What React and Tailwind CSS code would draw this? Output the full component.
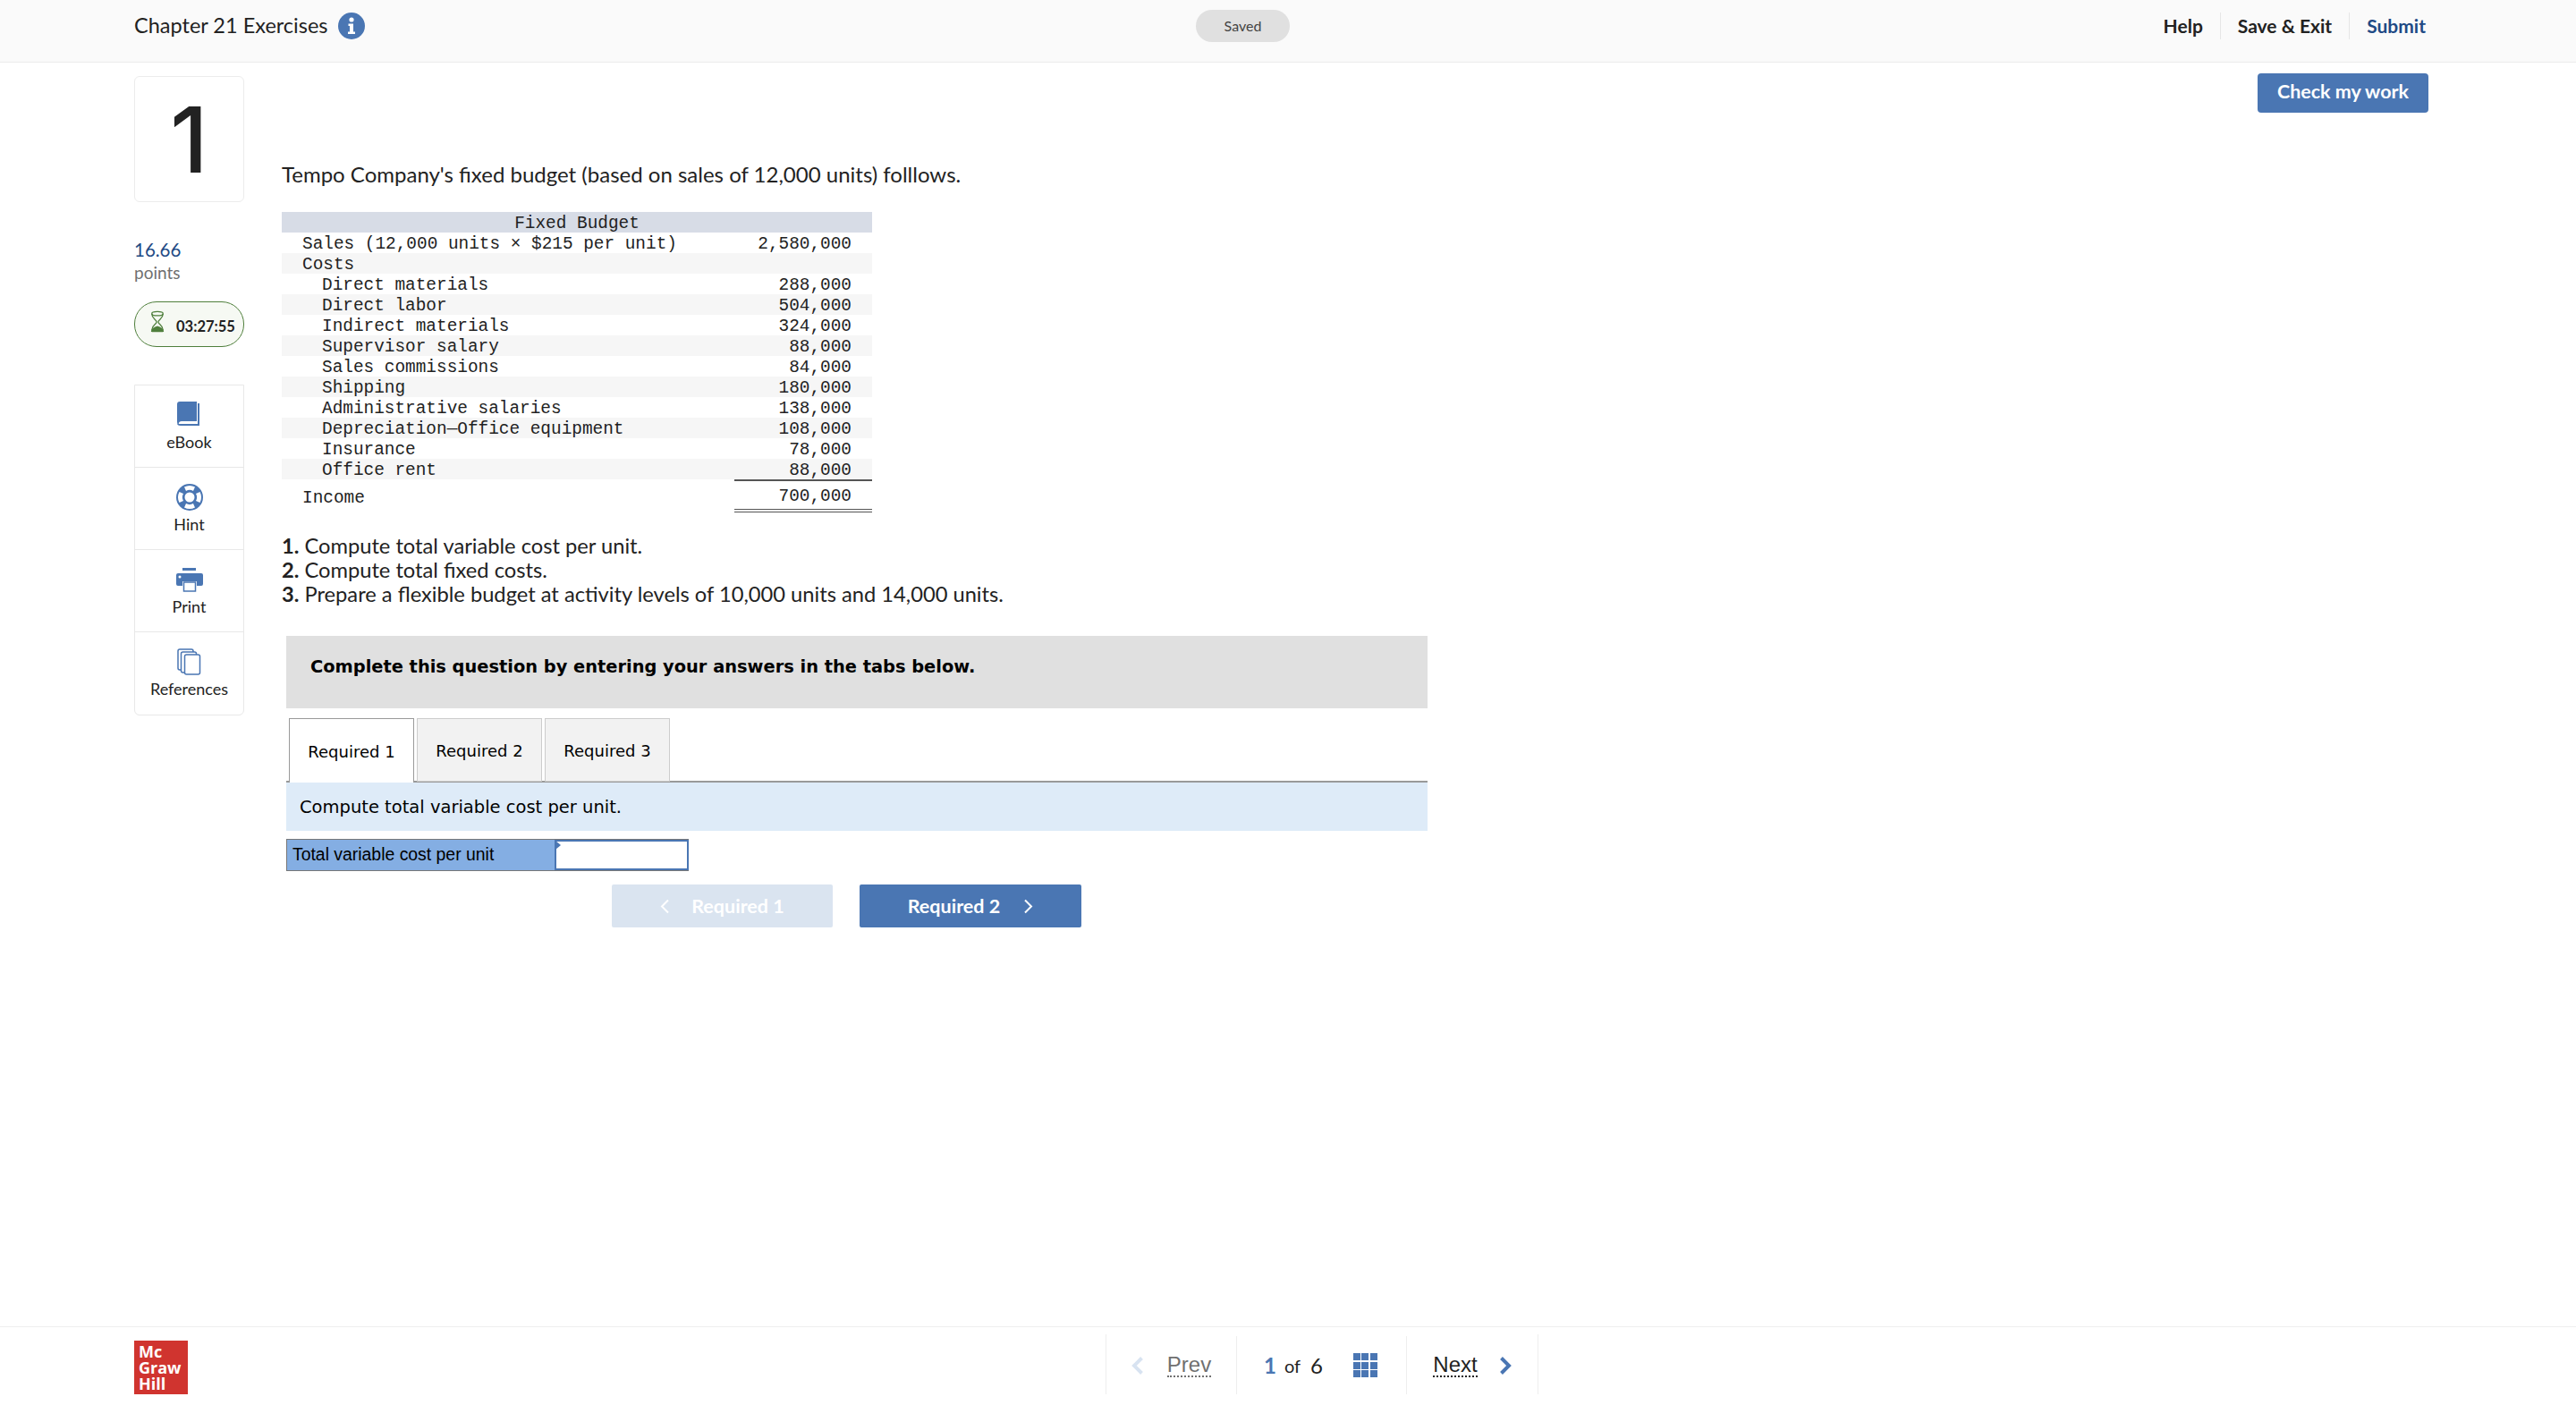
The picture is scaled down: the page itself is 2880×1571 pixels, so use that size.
const sans = "font-['Lato','Open_Sans',sans-serif]";

const budgetRows = [
  { label: "Sales (12,000 units × $215 per unit)", amount: "2,580,000", indent: false },
  { label: "Costs", amount: "", indent: false },
  { label: "Direct materials", amount: "288,000", indent: true },
  { label: "Direct labor", amount: "504,000", indent: true },
  { label: "Indirect materials", amount: "324,000", indent: true },
  { label: "Supervisor salary", amount: "88,000", indent: true },
  { label: "Sales commissions", amount: "84,000", indent: true },
  { label: "Shipping", amount: "180,000", indent: true },
  { label: "Administrative salaries", amount: "138,000", indent: true },
  { label: "Depreciation—Office equipment", amount: "108,000", indent: true },
  { label: "Insurance", amount: "78,000", indent: true },
  { label: "Office rent", amount: "88,000", indent: true },
];

function InfoIcon() {
  return (
    <svg width="30" height="30" viewBox="0 0 30 30">
      <circle cx="15" cy="15" r="15" fill="#4a76b3" />
      <circle cx="15" cy="8" r="2.600" fill="#fff" />
      <path d="M11.500 12.500h5.500v9h2v2.500h-8v-2.500h2v-6.500h-1.500z" fill="#fff" />
    </svg>
  );
}

function Hourglass() {
  return (
    <svg width="16" height="26" viewBox="0 0 18 28">
      <ellipse cx="9" cy="3.500" rx="7" ry="2.500" fill="#f6f9f3" stroke="#4f7f3c" strokeWidth="1.500" />
      <path d="M2 4c0 6 6 7 6 10s-6 4-6 10M16 4c0 6-6 7-6 10s6 4 6 10" fill="none" stroke="#4f7f3c" strokeWidth="1.500" />
      <path d="M1 26c0-4 5-6 8-7 3 1 8 3 8 7 0 1-16 1-16 0z" fill="#4f7f3c" />
    </svg>
  );
}

function BookIcon() {
  return (
    <svg width="28" height="30" viewBox="0 0 28 30">
      <path d="M3 0h19v22H5c-2 0-3 1-3 2v1c-1 0-2-1-2-2V3c0-2 1-3 3-3z" fill="#4a76b3" />
      <path d="M3 25h20V2h2v25H4c-3 0-4-1-4-3 1 1 2 1 3 1z" fill="#4a76b3" />
    </svg>
  );
}

function HintIcon() {
  return (
    <svg width="30" height="30" viewBox="0 0 30 30">
      <circle cx="15" cy="15" r="15" fill="#4a76b3" />
      <circle cx="15" cy="15" r="5.500" fill="#fff" />
      <path d="M9 3.500a13 13 0 0 1 12 0l-2 4.500a8 8 0 0 0-8 0zM9 26.500a13 13 0 0 0 12 0l-2-4.500a8 8 0 0 1-8 0zM3.500 9a13 13 0 0 0 0 12l4.500-2a8 8 0 0 1 0-8zM26.500 9a13 13 0 0 1 0 12l-4.500-2a8 8 0 0 0 0-8z" fill="#fff" />
    </svg>
  );
}

function PrintIcon() {
  return (
    <svg width="30" height="27" viewBox="0 0 30 27">
      <rect x="7" y="0" width="15" height="3" fill="#4a76b3" />
      <path d="M2 6h26a2 2 0 0 1 2 2v10a2 2 0 0 1-2 2h-5v-5H7v5H2a2 2 0 0 1-2-2V8a2 2 0 0 1 2-2z" fill="#4a76b3" />
      <circle cx="4" cy="10" r="1.500" fill="#fff" />
      <rect x="8.500" y="16" width="13" height="10" fill="#fff" stroke="#4a76b3" strokeWidth="1.500" />
    </svg>
  );
}

function RefIcon() {
  return (
    <svg width="27" height="30" viewBox="0 0 27 30" fill="#fff" stroke="#4a76b3" strokeWidth="1.500">
      <rect x="1" y="1" width="17" height="23" rx="2" />
      <rect x="4.500" y="4" width="17" height="23" rx="2" />
      <rect x="8.500" y="7" width="17" height="22" rx="2" />
    </svg>
  );
}

const tools = [
  { name: "eBook", icon: <BookIcon /> },
  { name: "Hint", icon: <HintIcon /> },
  { name: "Print", icon: <PrintIcon /> },
  { name: "References", icon: <RefIcon /> },
];

function Sidebar() {
  return (
    <div className="w-[123px] shrink-0 pt-[15px]">
      <div className="flex h-[141px] items-center justify-center rounded-md border border-[#ececec] font-['Inter',sans-serif] text-[102px] leading-none font-medium text-[#222]">
        1
      </div>
      <div className="mt-[40px] text-[20.500px] leading-[27px] text-[#1f4a85]">16.66</div>
      <div className="text-[19px] leading-[24px] text-[#707070]">points</div>
      <div className="mt-[20px] flex h-[51px] items-center gap-[13px] rounded-[25px] border border-[#4f7f3c] bg-[#f6f9f3] pl-[17px]">
        <div className="mb-[6px] flex">
          <Hourglass />
        </div>
        <span className="mt-[6px] text-[16.500px] font-bold text-[#222]">03:27:55</span>
      </div>
      <div className="mt-[42px] rounded-b-md border border-[#e8e8e8]">
        {tools.map((tool) => (
          <div
            key={tool.name}
            className="flex h-[92px] flex-col items-center border-b border-[#e8e8e8] pt-[18px] last:border-b-0"
          >
            <div className="flex h-[30px] items-center">{tool.icon}</div>
            <span className="mt-[3px] text-[18px] leading-[24px] text-[#222]">{tool.name}</span>
          </div>
        ))}
      </div>
    </div>
  );
}

function BudgetTable() {
  return (
    <table className="mt-[26px] w-[660px] table-fixed border-collapse font-['Liberation_Mono',monospace] text-[19.400px] leading-[19px] text-[#222]">
      <colgroup>
        <col className="w-[506px]" />
        <col className="w-[154px]" />
      </colgroup>
      <tbody>
        <tr className="h-[23px] bg-[#d7dce6]">
          <td colSpan={2} className="p-0 pt-[4px] text-center">Fixed Budget</td>
        </tr>
        {budgetRows.map((row, i) => (
          <tr key={row.label} className={`h-[23px] ${i % 2 === 1 ? "bg-[#f6f6f6]" : ""}`}>
            <td className={`whitespace-pre p-0 pt-[4px] ${row.indent ? "pl-[45px]" : "pl-[23px]"}`}>{row.label}</td>
            <td className="p-0 pt-[4px] pr-[23px] text-right">{row.amount}</td>
          </tr>
        ))}
        <tr>
          <td className="p-0 pl-[23px] pt-[6px]">Income</td>
          <td className="p-0 text-right">
            <div className="border-t-2 border-[#555] pr-[23px] pt-[8px] pb-[4px]">700,000</div>
            <div className="h-[4px] border-y border-[#555]"></div>
          </td>
        </tr>
      </tbody>
    </table>
  );
}

function Tabs() {
  const tabBase = "flex h-[71px] w-[140px] items-center justify-center border pt-[2px] text-[18px]";
  return (
    <div className="mt-[11px] flex h-[72px] gap-[3px] border-b-2 border-[#999] pl-[3px]">
      <div className={`${tabBase} border-[#999] border-b-0 bg-white h-[72px] relative z-10`}>Required 1</div>
      <div className={`${tabBase} border-[#ccc] bg-[#f2f2f2]`}>Required 2</div>
      <div className={`${tabBase} border-[#ccc] bg-[#f2f2f2]`}>Required 3</div>
    </div>
  );
}

function QuestionPanel() {
  return (
    <div className="ml-[5px] mt-[33px] w-[1276px] font-['DejaVu_Sans',sans-serif] text-black">
      <div className="h-[81px] bg-[#e0e0e0] pl-[27px] pt-[21px] text-[19.400px] leading-[28px] font-bold">
        Complete this question by entering your answers in the tabs below.
      </div>
      <Tabs />
      <div className="flex h-[54px] items-center bg-[#deebf8] pl-[15px] pt-[2px] text-[19.500px]">
        Compute total variable cost per unit.
      </div>
      <div className="mt-[9px] flex h-[36px] w-[450px] border-y border-[#777] font-['Liberation_Sans',sans-serif] text-[19.400px]">
        <div className="flex w-[300px] items-center border-l border-[#777] bg-[#84aee3] pl-[6px]">
          Total variable cost per unit
        </div>
        <div className="relative flex-1 border-2 border-[#4a76b3] bg-white">
          <span className="absolute -left-[1px] -top-[1px] h-0 w-0 border-y-[5px] border-l-[6px] border-y-transparent border-l-[#4a76b3]"></span>
        </div>
      </div>
      <div className="mt-[15px] flex gap-[30px] pl-[364px] font-bold text-white text-[21.500px]">
        <button type="button" className={`${sans} flex h-[48px] w-[247px] items-center justify-center gap-[24px] rounded-[2px] bg-[#dae4f0]`}>
          <svg width="11" height="17" viewBox="0 0 11 17" fill="none" stroke="#fff" strokeWidth="2"><path d="M9 1.500 2 8.500l7 7" /></svg>
          Required 1
        </button>
        <button type="button" className={`${sans} flex h-[48px] w-[248px] items-center justify-center gap-[26px] rounded-[2px] bg-[#4a76b3]`}>
          Required 2
          <svg width="11" height="17" viewBox="0 0 11 17" fill="none" stroke="#fff" strokeWidth="2"><path d="m2 1.500 7 7-7 7" /></svg>
        </button>
      </div>
    </div>
  );
}

function Footer() {
  return (
    <footer className="mt-auto flex h-[88px] border-t border-[#eee] pl-[150px]">
      <div className="mt-[15px] flex h-[60px] w-[60px] flex-col justify-center bg-[#d0342f] pl-[5px] font-['Open_Sans',sans-serif] text-[18px] leading-[18px] font-bold text-white">
        <span>Mc</span>
        <span>Graw</span>
        <span>Hill</span>
      </div>
      <div className="ml-[1026px] mt-[8px] flex h-[67px] items-center border-x border-[#eee] pt-[2px] font-['Liberation_Sans',sans-serif] text-[24px]">
        <div className="flex h-full w-[146px] items-center justify-center gap-[26px] border-r border-[#eee] text-[#707070]">
          <svg width="14" height="22" viewBox="0 0 14 22" fill="none" stroke="#d8e3f1" strokeWidth="4"><path d="M11.500 2.500 3 11l8.500 8.500" /></svg>
          <span className="border-b-2 border-dotted border-[#707070] leading-[25px]">Prev</span>
        </div>
        <div className={`${sans} flex h-full w-[190px] items-center border-r border-[#eee] pl-[30px] text-[#222]`}>
          <span className="font-bold text-[#4a76b3]">1</span>
          <span className="ml-[9px] text-[20px]">of</span>
          <span className="ml-[11px]">6</span>
          <div className="ml-[34px] grid w-[27px] grid-cols-3 gap-[1.500px]">
            {[...Array(9)].map((_, i) => (
              <span key={i} className="h-[8px] bg-[#4a76b3]"></span>
            ))}
          </div>
        </div>
        <div className="flex h-full w-[146px] items-center justify-center gap-[24px] text-[#222]">
          <span className="border-b-2 border-dotted border-[#222] leading-[25px]">Next</span>
          <svg width="14" height="22" viewBox="0 0 14 22" fill="none" stroke="#4a76b3" strokeWidth="4"><path d="m2.500 2.500 8.500 8.500-8.500 8.500" /></svg>
        </div>
      </div>
    </footer>
  );
}

export default function App() {
  return (
    <div className={`${sans} flex min-h-[1571px] flex-col bg-white text-[#222]`}>
      <header className="flex h-[70px] items-center border-b border-[#ececec] bg-[#fafafa] pb-[11px] pl-[150px] pr-[168px]">
        <div className="flex w-[1187px] items-center gap-[12px]">
          <span className="text-[23.500px]">Chapter 21 Exercises</span>
          <InfoIcon />
        </div>
        <div className="flex h-[36px] w-[105px] items-center justify-center rounded-[18px] bg-[#e0e0e0] text-[16px] text-[#444]">
          Saved
        </div>
        <nav className="ml-auto flex items-center text-[21px] font-bold">
          <span className="flex h-[30px] items-center border-r border-[#e6e6e6] pr-[19px]">Help</span>
          <span className="flex h-[30px] items-center border-r border-[#e6e6e6] px-[19px]">Save &amp; Exit</span>
          <span className="pl-[19px] text-[#1f4a85]">Submit</span>
        </nav>
      </header>

      <main className="flex pl-[150px] pr-[165px]">
        <Sidebar />
        <div className="ml-[42px] flex-1 pt-[109px]">
          <p className="text-[24px] leading-[32px] text-[#222]">
            Tempo Company's fixed budget (based on sales of 12,000 units) folllows.
          </p>
          <BudgetTable />
          <div className="mt-[24px] text-[23.700px] leading-[27px]">
            <p><b>1.</b> Compute total variable cost per unit.</p>
            <p><b>2.</b> Compute total fixed costs.</p>
            <p><b>3.</b> Prepare a flexible budget at activity levels of 10,000 units and 14,000 units.</p>
          </div>
          <QuestionPanel />
        </div>
        <div className="shrink-0 pt-[12px]">
          <button type="button" className="h-[44px] w-[191px] rounded-[4px] bg-[#4a76b3] pb-[3px] text-[21.500px] font-bold text-white">
            Check my work
          </button>
        </div>
      </main>

      <Footer />
    </div>
  );
}
